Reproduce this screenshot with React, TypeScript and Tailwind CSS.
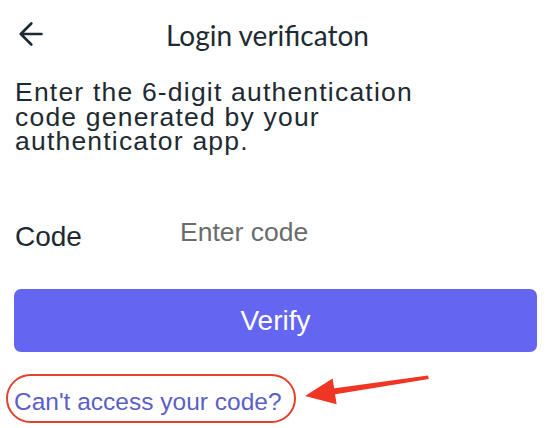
import React from 'react';

const sans = { fontFamily: '"Liberation Sans", Arial, sans-serif' };

export default function App() {
  return (
    <div className="relative h-[428px] w-[550px] overflow-hidden bg-white text-[#1e2a32] font-['Liberation_Sans',Arial,sans-serif]">
      <header className="flex items-start pl-[19px] pt-[20px]">
        <button className="mt-[2px] text-[#1e2a32]" aria-label="Back">
          <svg width="24" height="24" viewBox="0 0 24 24" fill="none" stroke="currentColor" strokeWidth="2.6" strokeLinecap="round" strokeLinejoin="round">
            <path d="M22.5 12H1.8M12.3 1.5 1.8 12l10.5 10.5" />
          </svg>
        </button>
        <h1 className="ml-[123px] mt-[1px] text-[28px] leading-none font-['Lato',sans-serif] text-[#1e2a32]">Login verificaton</h1>
      </header>

      <p className="mt-[31px] max-w-[430px] pl-[15px] text-[26.5px] leading-[24.5px] tracking-[1.2px] text-[#1e2a32]">
        Enter the 6-digit authentication code generated by your authenticator app.
      </p>

      <div className="mt-[66px] flex items-start pl-[15px]">
        <label className="mt-[3px] w-[165px] text-[28px] leading-none" style={sans}>Code</label>
        <input
          className="h-[26px] flex-1 border-0 bg-transparent p-0 text-[26.5px] outline-none placeholder:text-[#6b6b6b]"
          style={sans}
          placeholder="Enter code"
        />
      </div>

      <button className="mx-[14px] mt-[38px] flex h-[63px] w-[523px] items-center justify-center rounded-[7px] bg-[#6466f1] pt-[2px] text-[28px] leading-none text-white">
        Verify
      </button>

      <a className="mt-[38px] block pl-[14px] text-[24.5px] leading-none text-[#5b5fc7]" href="#">
        Can't access your code?
      </a>

      {/* annotation overlay */}
      <div className="pointer-events-none absolute left-[6px] top-[374px] h-[49px] w-[290px] rounded-full border-2 border-[#e5412d]" />
      <svg className="pointer-events-none absolute left-0 top-0" width="550" height="428" viewBox="0 0 550 428">
        <path d="M428 375.5 L428.8 379 L334 394.5 L333 388.5 Z" fill="#ef3523" />
        <polygon points="305,396 332.6,378.6 336.6,404.2" fill="#ef3523" />
      </svg>
    </div>
  );
}
